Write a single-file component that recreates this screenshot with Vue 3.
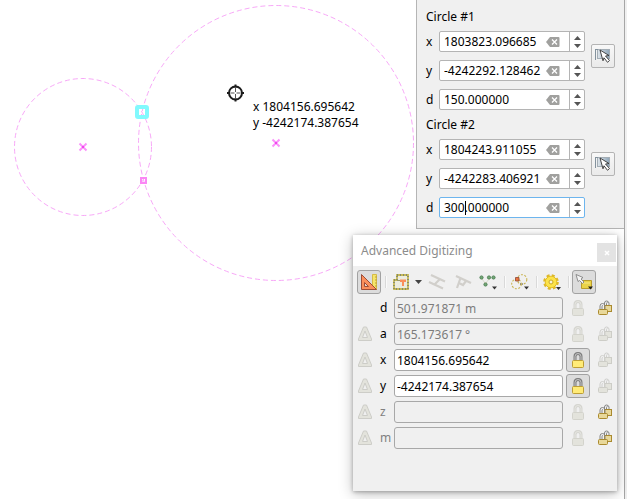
<script setup>
import { ref } from 'vue'

const circles = ref([
  { title: 'Circle #1', fields: [
    { key: 'x', value: '1803823.096685' },
    { key: 'y', value: '-4242292.128462' },
    { key: 'd', value: '150.000000' },
  ] },
  { title: 'Circle #2', fields: [
    { key: 'x', value: '1804243.911055' },
    { key: 'y', value: '-4242283.406921' },
    { key: 'd', value: '300.000000', active: true },
  ] },
])

const rows = ref([
  { key: 'd', value: '501.971871 m', readonly: true, relative: false, locked: false, repeat: true },
  { key: 'a', value: '165.173617 °', readonly: true, relative: true, locked: false, repeat: false },
  { key: 'x', value: '1804156.695642', relative: true, locked: true, repeat: false },
  { key: 'y', value: '-4242174.387654', relative: true, locked: true, repeat: false },
  { key: 'z', value: '', readonly: true, dim: true, relative: true, locked: false, repeat: true },
  { key: 'm', value: '', readonly: true, dim: true, relative: true, locked: false, repeat: true },
])
</script>

<template>
  <main class="app">
    <section class="canvas">
      <svg class="drawing" width="416" height="300" viewBox="0 0 416 300" aria-hidden="true">
        <g class="guide">
          <circle cx="83" cy="147" r="68.5" />
          <circle cx="276" cy="143" r="137.5" />
        </g>
        <rect class="snap" x="137" y="107" width="10" height="10" rx="1" />
        <rect class="node" x="141" y="178" width="5" height="5" />
        <path class="cross" d="M79.500 143.500l7 7m0-7l-7 7M272.500 139.500l7 7m0-7l-7 7" />
        <path class="cross-core" d="M82 146h2v2h-2zM275 142h2v2h-2z" />
        <g class="cursor">
          <circle cx="235.500" cy="93" r="6.500" />
          <path d="M235.500 84.500v3m0 11v3M227 93h3m11 0h3" />
          <path class="thin" d="M235.500 88v4m0 2v4M230.500 93h4m2 0h4" />
        </g>
      </svg>
      <div class="readout">
        <div>x 1804156.695642</div>
        <div>y -4242174.387654</div>
      </div>

      <form class="circles" @submit.prevent>
        <fieldset v-for="(circle, c) in circles" :key="circle.title" class="group">
          <legend class="group-title">{{ circle.title }}</legend>
          <div class="group-body">
            <div class="spins">
              <div v-for="f in circle.fields" :key="f.key" class="spin-row">
                <label :for="`c${c}-${f.key}`">{{ f.key }}</label>
                <div class="spin" :class="{ active: f.active }">
                  <input :id="`c${c}-${f.key}`" v-model="f.value" type="text">
                  <span v-if="f.active" class="caret"></span>
                  <button class="clear" type="button" aria-label="Clear" @click="f.value = ''">
                    <svg width="14" height="10" viewBox="0 0 14 10">
                      <path fill="#a0a09e" d="M4 0h8.500q1 0 1 1v8q0 1-1 1H4L0 5z" />
                      <path stroke="#fff" stroke-width="1.300" d="M6 2.500l5 5m0-5l-5 5" />
                    </svg>
                  </button>
                  <span class="steps">
                    <button type="button" aria-label="Increase">
                      <svg width="7" height="4" viewBox="0 0 7 4"><path fill="#555" d="M0 4L3.500 0 7 4z" /></svg>
                    </button>
                    <button type="button" aria-label="Decrease">
                      <svg width="7" height="4" viewBox="0 0 7 4"><path fill="#555" d="M0 0h7L3.500 4z" /></svg>
                    </button>
                  </span>
                </div>
              </div>
            </div>
            <button class="pick" type="button" aria-label="Pick from map">
              <svg width="16" height="16" viewBox="0 0 16 16">
                <defs>
                  <linearGradient :id="`pick${c}`" x1="0" x2="1">
                    <stop offset="0" stop-color="#dfe5ea" /><stop offset="1" stop-color="#8ea5b8" />
                  </linearGradient>
                </defs>
                <rect x="2.500" y="1.500" width="12" height="9" :fill="`url(#pick${c})`" stroke="#a3adb5" />
                <path stroke="#83929d" d="M.5 1v11M1 1.500h2" />
                <path fill="#fff" stroke="#333" stroke-width=".9" d="M5 2l9 5.500-3.500.5 4 4.500-2 1.800L9 9.800l-1 3z" />
              </svg>
            </button>
          </div>
        </fieldset>
      </form>
    </section>
    <aside class="rail"></aside>

    <section class="dock">
      <header class="titlebar">
        <h1>Advanced Digitizing</h1>
        <button class="close" type="button" aria-label="Close">
          <svg width="6" height="6" viewBox="0 0 6 6"><path stroke="#fff" stroke-width="1.500" d="M1 1l4 4m0-4L1 5" /></svg>
        </button>
      </header>

      <div class="toolbar">
        <button class="tool pressed" type="button" aria-label="Enable advanced digitizing">
          <svg width="18" height="18" viewBox="0 0 18 18">
            <path fill="#f5e56a" stroke="#d5bb45" d="M12.500 1.500h4v15h-4z" />
            <path stroke="#bda13b" d="M15 4h2M15 7h2M15 10h2M15 13h2" />
            <path fill="#fb8f5b" stroke="#9e4d37" d="M1.500 1.500v15h15z" />
            <path fill="#e5d9d2" stroke="#9e4d37" d="M4.500 9.500v4h4z" />
          </svg>
        </button>
        <i class="sep"></i>
        <button class="tool menu" type="button" aria-label="Construction mode">
          <svg width="16" height="16" viewBox="0 0 16 16">
            <path fill="#ececdf" stroke="#c8b956" stroke-width="1.800" d="M4 1h11v14H1V6h3z" />
            <path fill="none" stroke="#858b68" stroke-width="1.800" stroke-dasharray="1 2" d="M4 1h11v14H1V6h3z" />
            <path stroke="#9b9867" d="M4 6.500h3" />
            <path fill="#fb8f5b" d="M7 5.500h6V8h-2v4H9V8H7z" />
          </svg>
          <svg width="7" height="4" viewBox="0 0 7 4"><path fill="#444" d="M0 0h7L3.500 4z" /></svg>
        </button>
        <button class="tool faint" type="button" aria-label="Parallel" disabled>
          <svg width="18" height="16" viewBox="0 0 18 16">
            <path stroke="#d1cfcb" stroke-width="2.200" d="M3 1l14 6.500M1 8l14 6.500M12 5l-6 6" />
          </svg>
        </button>
        <button class="tool faint" type="button" aria-label="Perpendicular" disabled>
          <svg width="18" height="16" viewBox="0 0 18 16">
            <path fill="none" stroke="#d1cfcb" stroke-width="2.200" d="M2 2l15 7M6.500 4L3 14M12 7l-3 4-4-2" />
          </svg>
        </button>
        <button class="tool" type="button" aria-label="Snap to common angles">
          <svg width="18" height="16" viewBox="0 0 18 16">
            <g fill="#73a876" stroke="#477a4e" stroke-width=".9">
              <circle cx="2.500" cy="3.500" r="1.600" /><circle cx="10" cy="3.500" r="1.600" /><circle cx="14.500" cy="3.500" r="1.600" /><circle cx="6.500" cy="10.500" r="1.600" />
            </g>
            <path stroke="#b6bd97" stroke-dasharray="1 1" d="M3 5l3 4M7 9l3-4" />
            <path fill="#333" d="M13 12.500h5l-2.500 3z" />
          </svg>
        </button>
        <i class="sep"></i>
        <button class="tool" type="button" aria-label="Floater settings">
          <svg width="18" height="16" viewBox="0 0 18 16">
            <g fill="none" stroke="#c9b553" stroke-width="1.100" stroke-dasharray="2 1.500">
              <circle cx="5.500" cy="10" r="4.800" /><circle cx="11" cy="5.500" r="4.800" />
            </g>
            <path fill="#ec7440" stroke="#8c4936" stroke-width=".8" d="M4.500 3.500h3.500v3.500h-3.500z" />
            <path stroke="#555" stroke-dasharray="1 1" d="M9 10h4" />
            <path fill="#333" d="M13 12.500h5l-2.500 3z" />
          </svg>
        </button>
        <i class="sep"></i>
        <button class="tool" type="button" aria-label="Settings">
          <svg width="18" height="17" viewBox="0 0 18 17">
            <circle cx="8" cy="8" r="6.500" fill="none" stroke="#ddb72a" stroke-width="2.600" stroke-dasharray="2.900 2.205" />
            <circle cx="8" cy="8" r="5.800" fill="#fce34a" stroke="#e3be25" />
            <circle cx="8" cy="8" r="2" fill="#f7f3dc" stroke="#caa91f" />
            <path fill="#333" d="M13 13h5l-2.500 3z" />
          </svg>
        </button>
        <i class="sep"></i>
        <button class="tool pressed" type="button" aria-label="Lock selection">
          <svg width="18" height="18" viewBox="0 0 18 18">
            <path fill="#ead348" stroke="#b99c2d" d="M6.500 7.500h10v8h-10z" />
            <path fill="none" stroke="#f6e98a" d="M8 10h7" />
            <path fill="#f4f4f4" stroke="#777" stroke-width=".8" d="M1 1.500l7 3-2 1.500 3 3-1.500 1.500-3-3L3 8.500z" />
            <path fill="#222" d="M13 13.500h5l-2.500 3z" />
          </svg>
        </button>
      </div>

      <form class="rows" @submit.prevent>
        <div v-for="r in rows" :key="r.key" class="row" :class="{ dim: r.dim }">
          <span class="slot">
            <button v-if="r.relative" type="button" class="delta" :aria-label="`Relative ${r.key}`" disabled>
              <svg width="14" height="16" viewBox="0 0 14 16">
                <path fill="#e3e3dc" stroke="#cdcdc8" fill-rule="evenodd" stroke-linejoin="round" d="M5.500 1h3L13.500 13v1.500H.5V13zM7 5L4.500 11.500h5z" />
              </svg>
            </button>
          </span>
          <label :for="`adv-${r.key}`">{{ r.key }}</label>
          <input :id="`adv-${r.key}`" v-model="r.value" type="text" :disabled="r.readonly">
          <button type="button" class="lock" :class="{ pressed: r.locked }" :aria-label="`Lock ${r.key}`" :disabled="!r.locked">
            <svg width="14" height="17" viewBox="0 0 14 17" :class="{ off: !r.locked }">
              <path class="shackle-edge" d="M4 8.500V4.500q0-3 3-3t3 3v4" />
              <path class="shackle" d="M4 8.500V4.500q0-3 3-3t3 3v4" />
              <rect class="lock-body" x="1.500" y="8.500" width="11" height="7" rx="1" />
            </svg>
          </button>
          <button type="button" class="repeat" :aria-label="`Lock ${r.key} repeatedly`" :disabled="!r.repeat">
            <svg width="16" height="16" viewBox="0 0 16 16" :class="{ off: !r.repeat }">
              <path class="ring" d="M7.500 5V3q0-2 2-2t2.500 2v3M9.500 5V3.500q0-1 1-1" />
              <rect class="double-body" x="7.500" y="5.500" width="7" height="6" />
              <path class="ring" d="M3 9V6q0-2.500 2.500-2.500T8 6v3M5 9V6.500q0-1 1-1" />
              <rect class="double-body" x="1.500" y="9.500" width="9" height="5" rx="1" />
            </svg>
          </button>
        </div>
      </form>
    </section>
  </main>
</template>

<style>
body {
  background: #fff;
}
</style>

<style scoped>
.app {
  position: relative;
  display: flex;
  min-height: 100vh;
  overflow: hidden;
  font-family: "Noto Sans", "Open Sans", sans-serif;
  font-size: 12px;
  line-height: 16px;
  color: #000;
}
button, input {
  box-sizing: border-box;
  margin: 0;
  padding: 0;
  font: inherit;
  color: inherit;
}
button {
  display: flex;
  align-items: center;
  justify-content: center;
  border: 0;
  background: none;
}
svg { display: block; flex: none; fill: none; }

.canvas { position: relative; flex: 1; background: #fff; }
.drawing { position: absolute; left: 0; top: 0; }
.guide { stroke: #f8a8f8; stroke-width: 1; stroke-dasharray: 5 3; }
.snap { stroke: #82f9fd; stroke-width: 4; }
.node { stroke: #fb86f5; stroke-width: 2; }
.cross { stroke: #fb91fb; stroke-width: 2; }
.cross-core { fill: #f048ec; }
.cursor { stroke: #1c1c1c; stroke-width: 2; }
.cursor .thin { stroke-width: 1; stroke: #555; }
.readout { position: absolute; left: 253px; top: 99px; }

.circles {
  position: absolute;
  top: 0;
  right: 0;
  box-sizing: border-box;
  width: 208px;
  padding: 9px 9px 10px 9px;
  border: solid #b5b5b5;
  border-width: 0 0 1px 1px;
  background: #f0f0f0;
}
.group { margin: 0; padding: 0; border: 0; min-width: 0; }
.group + .group { margin-top: 7px; }
.group-title { padding: 0 0 6px; line-height: 16px; }
.group-body { display: flex; gap: 6px; }
.spins { flex: 1; min-width: 0; display: flex; flex-direction: column; gap: 8px; }
.spin-row { display: flex; align-items: center; }
.spin-row label { flex: none; width: 13px; }
.spin {
  position: relative;
  flex: 1;
  min-width: 0;
  display: flex;
  box-sizing: border-box;
  height: 21px;
  border: 1px solid #b4b4b4;
  border-radius: 2px;
  background: #fff;
}
.spin.active { border-color: #6db5ee; }
.spin input { flex: 1; width: 0; min-width: 0; padding-left: 4px; border: 0; background: none; outline: 0; }
.clear { flex: none; width: 14px; margin: 0 9px 0 0; }
.steps { flex: none; display: flex; flex-direction: column; justify-content: center; gap: 4px; width: 14px; border-left: 1px solid #b4b4b4; }
.steps button { height: 4px; }
.caret { position: absolute; left: 25px; top: 3px; width: 1px; height: 14px; background: #000; }
.pick {
  flex: none;
  width: 24px;
  height: 24px;
  margin-top: 13px;
  border: 1px solid #b4b4b4;
  border-radius: 2px;
  background: linear-gradient(#f8f8f8, #eaeaea);
}

.rail { width: 2px; border-left: 1px solid #a6a6a6; background: #f0f0f0; }

.dock {
  position: absolute;
  right: 10px;
  top: 235px;
  box-sizing: border-box;
  width: 264px;
  padding-bottom: 41px;
  background: #f0f0f0;
  box-shadow: 0 1px 4px rgba(0, 0, 0, .3), 0 3px 14px rgba(0, 0, 0, .24);
}
.titlebar {
  display: flex;
  align-items: center;
  justify-content: space-between;
  height: 31px;
  padding: 0 1px 0 8px;
  background: #fff;
}
h1 { margin: 0; font-size: 12px; font-weight: 400; color: #8c8c8c; }
.close { width: 19px; height: 19px; margin-top: 4px; background: #e3e3e3; }

.toolbar { display: flex; align-items: center; height: 24px; padding: 4px 4px 2px; }
.tool { flex: none; width: 24px; height: 24px; }
.menu { gap: 6px; width: 35px; justify-content: flex-end; padding-right: 2px; }
.faint { width: 26px; }
.sep { width: 1px; height: 12px; margin: 0 2px 0 4px; background: #d9d9d9; border-right: 1px solid #fafafa; }
.pressed { border: 1px solid #a2a2a2; border-radius: 3px; background: #dcdcdc; }

.rows { display: flex; flex-direction: column; gap: 2px; padding: 0 0 0 4px; }
.row { display: flex; align-items: center; height: 24px; }
.slot { flex: none; width: 16px; }
.delta { width: 16px; }
.row label { flex: none; box-sizing: border-box; width: 21px; padding-left: 7px; }
.row input {
  flex: 1;
  min-width: 0;
  height: 22px;
  padding: 0 2px;
  border: 1px solid #a8a8a8;
  border-radius: 3px;
  background: #fff;
  outline: 0;
}
.row input:disabled { background: #f0f0f0; color: #7c7c7c; }
.dim label { color: #808080; }
.lock { flex: none; width: 24px; height: 24px; margin-left: 3px; }
.repeat { flex: none; width: 27px; height: 24px; padding-left: 2px; }

.shackle-edge { stroke: #7c7c7c; stroke-width: 3; }
.shackle { stroke: #c6c6c6; stroke-width: 1; }
.lock-body { fill: #ffeb77; stroke: #bd9e35; }
.ring { stroke: #858585; stroke-width: 1; }
.double-body { fill: #e8d89a; stroke: #aa8a2f; }
.off .shackle-edge { stroke: #d4d4cf; }
.off .shackle { stroke: #e7e7e2; }
.off .lock-body { fill: #e3e3dc; stroke: #d3d3cc; }
.off .ring { stroke: #cfcfcc; }
.off .double-body { fill: #e3e3dc; stroke: #cdcdc7; }
</style>
